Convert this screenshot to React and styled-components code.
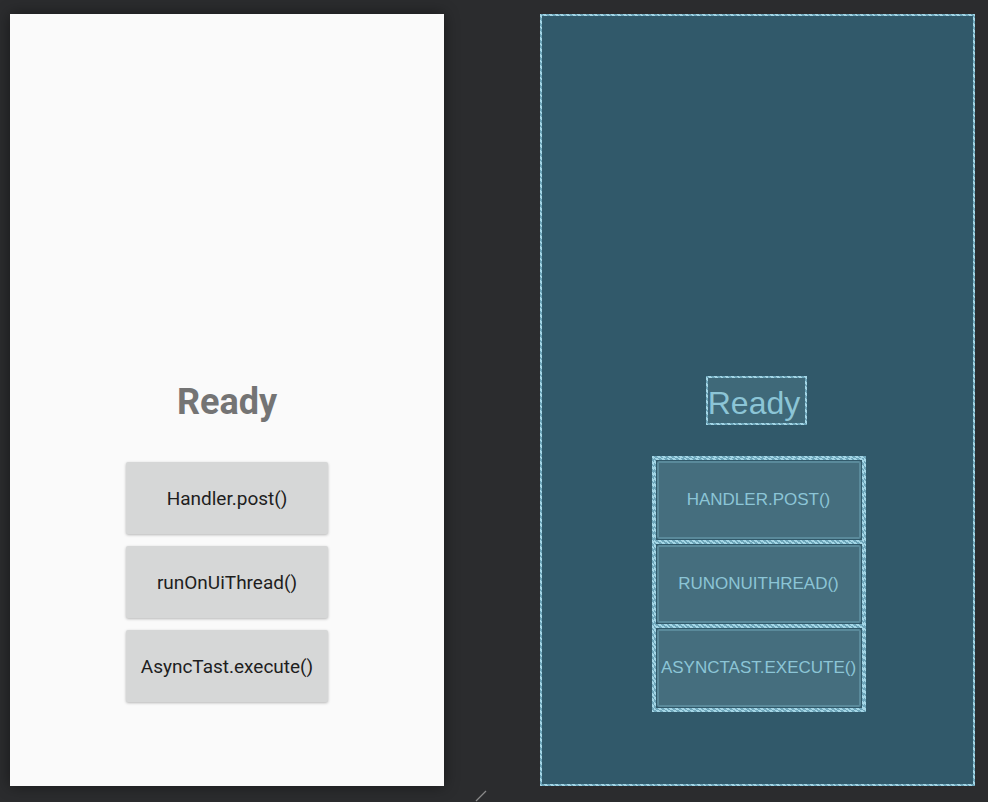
import styled, { createGlobalStyle, css } from "styled-components";

const GlobalStyle = createGlobalStyle`
  html, body {
    margin: 0;
    padding: 0;
    background: #2b2c2e;
    font-family: Roboto, "Liberation Sans", sans-serif;
  }
`;

// stippled blueprint outline, like the layout editor draws it
const dotted = css`
  border: 2px solid transparent;
  border-image: repeating-linear-gradient(
      45deg,
      #a4d6e6 0 2px,
      #6ea6ba 2px 4px
    )
    2;
`;

const Page = styled.div`
  width: 988px;
  height: 802px;
  box-sizing: border-box;
  padding: 14px 0 0 10px;
  display: flex;
  gap: 96px;
  position: relative;
  overflow: hidden;
`;

const Screen = styled.div`
  width: 434px;
  height: 772px;
  box-sizing: border-box;
  display: flex;
  flex-direction: column;
  align-items: center;
  padding-top: 364px;
  ${(p) =>
    p.$blueprint
      ? css`
          width: 435px;
          background: #31596a;
          ${dotted};
          padding-top: 360px;
          padding-left: 2px;
        `
      : css`
          background: #fafafa;
          box-shadow: 0 0 14px rgba(0, 0, 0, 0.45);
        `}
`;

const Title = styled.div`
  ${(p) =>
    p.$blueprint
      ? css`
          font-family: "Liberation Sans", Arial, sans-serif;
          font-size: 32px;
          line-height: 50px;
          height: 45px;
          overflow: hidden;
          color: #8cc5d6;
          background: #3f6979;
          ${dotted};
          padding: 0 5px 0 0;
          margin: 0 4px 31px 0;
        `
      : css`
          font-size: 36px;
          font-weight: 700;
          line-height: 48px;
          height: 48px;
          color: #747474;
          margin-bottom: 36px;
        `}
`;

const Stack = styled.div`
  display: flex;
  flex-direction: column;
  ${(p) =>
    p.$blueprint
      ? css`
          width: 214px;
          box-sizing: border-box;
          ${dotted};
        `
      : css`
          gap: 12px;
        `}
`;

const Button = styled.div`
  display: flex;
  align-items: center;
  justify-content: center;
  box-sizing: border-box;
  ${(p) =>
    p.$blueprint
      ? css`
          height: 84px;
          ${dotted};
          padding: 1px;
        `
      : css`
          width: 202px;
          height: 72px;
          background: #d6d7d7;
          border-radius: 2px;
          box-shadow: 0 1px 3px rgba(0, 0, 0, 0.28);
          font-size: 19px;
          color: #1e1e1e;
        `}
`;

const Inner = styled.div`
  flex: 1;
  align-self: stretch;
  display: flex;
  align-items: center;
  justify-content: center;
  background: #456e7e;
  border: 2px solid #5a8a9b;
  border-radius: 2px;
  font-family: "Liberation Sans", Arial, sans-serif;
  font-size: 17px;
  color: #8cc5d6;
  text-transform: uppercase;
  white-space: nowrap;
`;

const Handle = styled.svg`
  position: absolute;
  left: 474px;
  top: 789px;
`;

const labels = ["Handler.post()", "runOnUiThread()", "AsyncTast.execute()"];

const App = () => {
  return (
    <>
      <GlobalStyle />
      <Page>
        <Screen>
          <Title>Ready</Title>
          <Stack>
            {labels.map((l) => (
              <Button key={l}>{l}</Button>
            ))}
          </Stack>
        </Screen>
        <Screen $blueprint>
          <Title $blueprint>Ready</Title>
          <Stack $blueprint>
            {labels.map((l) => (
              <Button $blueprint key={l}>
                <Inner>{l}</Inner>
              </Button>
            ))}
          </Stack>
        </Screen>
        <Handle width="14" height="14" viewBox="0 0 14 14">
          <line x1="2" y1="12" x2="12" y2="2" stroke="#8a8a8a" strokeWidth="1.2" />
        </Handle>
      </Page>
    </>
  );
};

export default App;
